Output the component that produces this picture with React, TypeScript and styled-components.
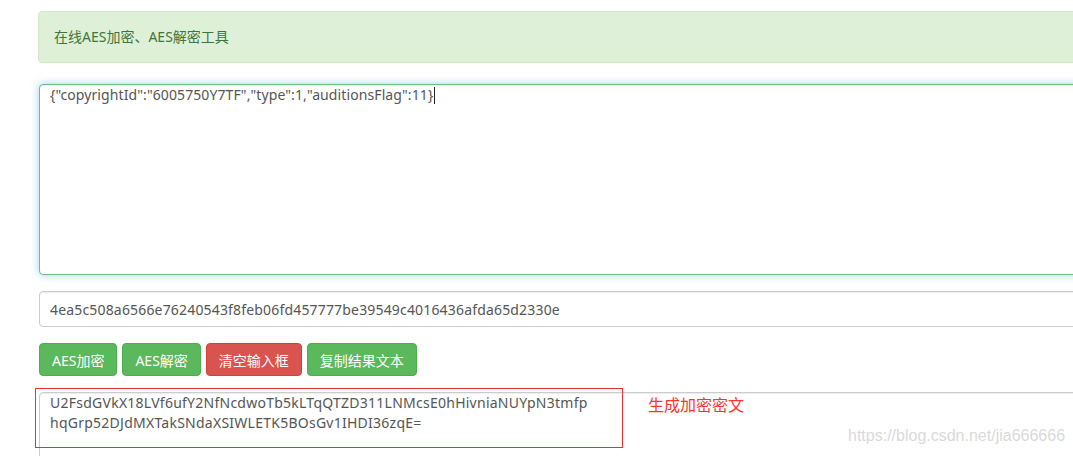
import React from 'react';
import styled, { createGlobalStyle } from 'styled-components';

const GlobalStyle = createGlobalStyle`
    html, body {
        margin: 0;
        padding: 0;
        background: #fff;
        overflow: hidden;
    }
    body {
        font-family: "Noto Sans", "Noto Sans CJK SC", sans-serif;
        font-size: 14px;
        color: #333;
    }
`;

const buttons = [
    { label: 'AES加密', variant: 'success' },
    { label: 'AES解密', variant: 'success' },
    { label: '清空输入框', variant: 'danger' },
    { label: '复制结果文本', variant: 'success' },
] as const;

const plainText = '{"copyrightId":"6005750Y7TF","type":1,"auditionsFlag":11}';
const secretKey = '4ea5c508a6566e76240543f8feb06fd457777be39549c4016436afda65d2330e';
const cipherLines = [
    'U2FsdGVkX18LVf6ufY2NfNcdwoTb5kLTqQTZD311LNMcsE0hHivniaNUYpN3tmfp',
    'hqGrp52DJdMXTakSNdaXSIWLETK5BOsGv1IHDI36zqE=',
];

export default function App() {
    return (
        <>
            <GlobalStyle />
            <Page>
                <Alert>在线AES加密、AES解密工具</Alert>

                {/* plain text input, focused */}
                <TextArea $focused $height={191} $spacing={0.1}>
                    {plainText}
                    <Caret />
                </TextArea>

                <KeyInput>{secretKey}</KeyInput>

                <Toolbar>
                    {buttons.map((b) => (
                        <Button key={b.label} $variant={b.variant}>{b.label}</Button>
                    ))}
                </Toolbar>

                {/* result box with screenshot annotation on top */}
                <ResultWrap>
                    <TextArea $height={80} $spacing={0.25}>
                        {cipherLines.map((line) => (
                            <div key={line}>{line}</div>
                        ))}
                    </TextArea>
                    <Marker />
                    <MarkerLabel>生成加密密文</MarkerLabel>
                </ResultWrap>
            </Page>
            <Watermark>https://blog.csdn.net/jia666666</Watermark>
        </>
    );
}

const Page = styled.div`
    display: flex;
    flex-direction: column;
    gap: 16px;
    width: 1110px;
    padding: 11px 0 0 38px;
`;

const Alert = styled.div`
    padding: 15px 15px;
    line-height: 20px;
    background: #dff0d8;
    border: 1px solid #d6e9c6;
    border-radius: 4px;
    color: #3c763d;
    margin-bottom: 5px;
`;

const TextArea = styled.div<{ $focused?: boolean; $height: number; $spacing: number }>`
    margin-left: 1px;
    height: ${(p) => p.$height}px;
    padding: 0 10px;
    line-height: 20px;
    letter-spacing: ${(p) => p.$spacing}px;
    color: #555;
    background: #fff;
    border: 1px solid ${(p) => (p.$focused ? '#6cbf8a' : '#ccc')};
    border-radius: 4px;
    box-sizing: border-box;
    box-shadow: ${(p) => (p.$focused
        ? 'inset 0 1px 1px rgba(0,0,0,.075), 0 0 8px rgba(102,175,233,.6)'
        : 'inset 0 1px 1px rgba(0,0,0,.075)')};
    white-space: pre;
`;

const Caret = styled.span`
    display: inline-block;
    width: 1px;
    height: 17px;
    margin-left: 1px;
    vertical-align: -4px;
    background: #222;
`;

const KeyInput = styled.div`
    margin-left: 1px;
    height: 36px;
    padding: 0 10px;
    display: flex;
    align-items: center;
    letter-spacing: 0.17px;
    color: #555;
    border: 1px solid #ccc;
    border-radius: 4px;
    box-sizing: border-box;
    box-shadow: inset 0 1px 1px rgba(0,0,0,.075);
`;

const Toolbar = styled.div`
    display: flex;
    gap: 5px;
    margin-left: 1px;
`;

const Button = styled.button<{ $variant: 'success' | 'danger' }>`
    height: 33px;
    padding: 0 12px;
    font-family: "Noto Sans", "Noto Sans CJK SC", sans-serif;
    font-size: 14px;
    color: #fff;
    background: ${(p) => (p.$variant === 'danger' ? '#d9534f' : '#5cb85c')};
    border: 1px solid ${(p) => (p.$variant === 'danger' ? '#d43f3a' : '#4cae4c')};
    border-radius: 4px;
    cursor: pointer;
`;

const ResultWrap = styled.div`
    position: relative;
`;

const Marker = styled.div`
    position: absolute;
    left: -3px;
    top: -4px;
    width: 586px;
    height: 58px;
    border: 1px solid #e53333;
    pointer-events: none;
`;

const MarkerLabel = styled.div`
    position: absolute;
    left: 610px;
    top: 1px;
    font-family: "Noto Sans CJK SC", sans-serif;
    font-size: 16px;
    line-height: 22px;
    color: #ff3333;
`;

const Watermark = styled.div`
    position: absolute;
    left: 848px;
    top: 426px;
    font-family: "Liberation Sans", Arial, sans-serif;
    font-size: 16px;
    line-height: 20px;
    color: rgba(200, 200, 200, 0.7);
`;
